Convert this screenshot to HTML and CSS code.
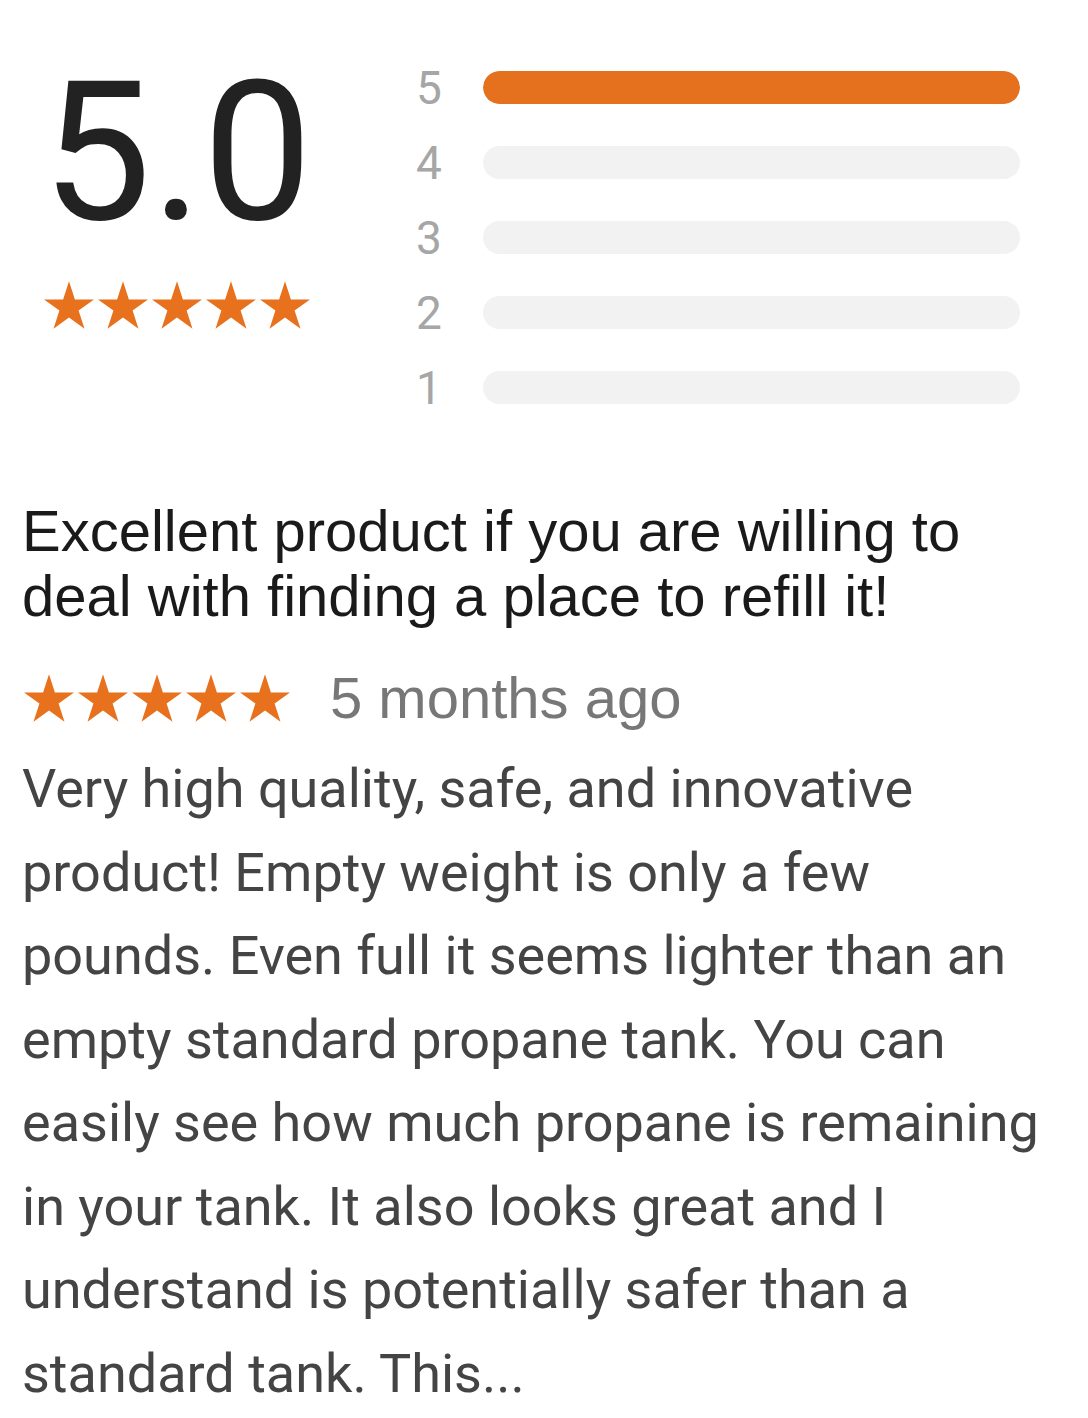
FILE: index.html
```html
<!DOCTYPE html>
<html lang="en">
<head>
  <meta charset="UTF-8">
  <title>Reviews</title>
  <link rel="stylesheet" href="styles.css">
</head>
<body>

  <div class="summary">
    <div class="summary-score">
      <div class="score">5.0</div>
      <div class="stars stars-big">
        <svg viewBox="0 0 54 54"><polygon points="27,3.2 32.9,21.4 52,21.4 36.6,32.6 42.5,50.8 27,39.6 11.5,50.8 17.4,32.6 2,21.4 21.1,21.4"/></svg>
        <svg viewBox="0 0 54 54"><polygon points="27,3.2 32.9,21.4 52,21.4 36.6,32.6 42.5,50.8 27,39.6 11.5,50.8 17.4,32.6 2,21.4 21.1,21.4"/></svg>
        <svg viewBox="0 0 54 54"><polygon points="27,3.2 32.9,21.4 52,21.4 36.6,32.6 42.5,50.8 27,39.6 11.5,50.8 17.4,32.6 2,21.4 21.1,21.4"/></svg>
        <svg viewBox="0 0 54 54"><polygon points="27,3.2 32.9,21.4 52,21.4 36.6,32.6 42.5,50.8 27,39.6 11.5,50.8 17.4,32.6 2,21.4 21.1,21.4"/></svg>
        <svg viewBox="0 0 54 54"><polygon points="27,3.2 32.9,21.4 52,21.4 36.6,32.6 42.5,50.8 27,39.6 11.5,50.8 17.4,32.6 2,21.4 21.1,21.4"/></svg>
      </div>
    </div>

    <div class="bars">
      <div class="bar-row"><span class="bar-label">5</span><div class="bar"><div class="bar-fill" style="width: 100%"></div></div></div>
      <div class="bar-row"><span class="bar-label">4</span><div class="bar"><div class="bar-fill" style="width: 0%"></div></div></div>
      <div class="bar-row"><span class="bar-label">3</span><div class="bar"><div class="bar-fill" style="width: 0%"></div></div></div>
      <div class="bar-row"><span class="bar-label">2</span><div class="bar"><div class="bar-fill" style="width: 0%"></div></div></div>
      <div class="bar-row"><span class="bar-label">1</span><div class="bar"><div class="bar-fill" style="width: 0%"></div></div></div>
    </div>
  </div>

  <div class="review">
    <h2 class="review-title">Excellent product if you are willing to deal with finding a place to refill it!</h2>
    <div class="review-meta">
      <div class="stars stars-small">
        <svg viewBox="0 0 54 54"><polygon points="27,3.2 32.9,21.4 52,21.4 36.6,32.6 42.5,50.8 27,39.6 11.5,50.8 17.4,32.6 2,21.4 21.1,21.4"/></svg>
        <svg viewBox="0 0 54 54"><polygon points="27,3.2 32.9,21.4 52,21.4 36.6,32.6 42.5,50.8 27,39.6 11.5,50.8 17.4,32.6 2,21.4 21.1,21.4"/></svg>
        <svg viewBox="0 0 54 54"><polygon points="27,3.2 32.9,21.4 52,21.4 36.6,32.6 42.5,50.8 27,39.6 11.5,50.8 17.4,32.6 2,21.4 21.1,21.4"/></svg>
        <svg viewBox="0 0 54 54"><polygon points="27,3.2 32.9,21.4 52,21.4 36.6,32.6 42.5,50.8 27,39.6 11.5,50.8 17.4,32.6 2,21.4 21.1,21.4"/></svg>
        <svg viewBox="0 0 54 54"><polygon points="27,3.2 32.9,21.4 52,21.4 36.6,32.6 42.5,50.8 27,39.6 11.5,50.8 17.4,32.6 2,21.4 21.1,21.4"/></svg>
      </div>
      <span class="review-date">5 months ago</span>
    </div>
    <p class="review-body">Very high quality, safe, and innovative product! Empty weight is only a few pounds. Even full it seems lighter than an empty standard propane tank. You can easily see how much propane is remaining in your tank. It also looks great and I understand is potentially safer than a standard tank. This...</p>
  </div>

</body>
</html>
```

FILE: styles.css
```css
body, html {
  margin: 0;
  padding: 0;
  background-color: #fff;
  color: #222;
}

body {
  padding: 0 22px;
}

.summary {
  display: flex;
  align-items: flex-start;
  padding-top: 71px;
}

.summary-score {
  width: 310px;
  display: flex;
  flex-direction: column;
  align-items: center;
}

.score {
  font-family: Roboto, sans-serif;
  font-size: 195px;
  line-height: 1;
  color: #222;
  margin-top: -16px;
}

.stars {
  display: flex;
  fill: #e8711e;
}

.stars-big svg,
.stars-small svg {
  width: 54px;
  height: 54px;
}

.stars-big {
  margin-top: 28px;
}

.bars {
  flex: 1;
  display: flex;
  flex-direction: column;
  gap: 42px;
  margin-left: 86px;
  margin-right: 46px;
}

.bar-row {
  display: flex;
  align-items: center;
  height: 33px;
}

.bar-label {
  width: 67px;
  margin-left: -2px;
  font-family: Roboto, sans-serif;
  font-size: 46px;
  color: #a6a6a6;
}

.bar {
  flex: 1;
  height: 33px;
  border-radius: 17px;
  background-color: #f2f2f2;
  overflow: hidden;
}

.bar-fill {
  height: 100%;
  background-color: #e5701d;
  border-radius: 17px;
}

.review {
  margin-top: 94px;
}

.review-title {
  margin: 0;
  font-family: "Liberation Sans", Arial, sans-serif;
  font-weight: normal;
  font-size: 58px;
  line-height: 65px;
  color: #1a1a1a;
}

.review-meta {
  display: flex;
  align-items: center;
  margin-top: 43px;
}

.review-date {
  margin-left: 38px;
  font-family: "Liberation Sans", Arial, sans-serif;
  font-size: 58px;
  line-height: 54px;
  color: #777;
}

.review-body {
  margin: 22px 0 0;
  font-family: Roboto, sans-serif;
  font-size: 54px;
  line-height: 83.5px;
  color: #444;
}
```
